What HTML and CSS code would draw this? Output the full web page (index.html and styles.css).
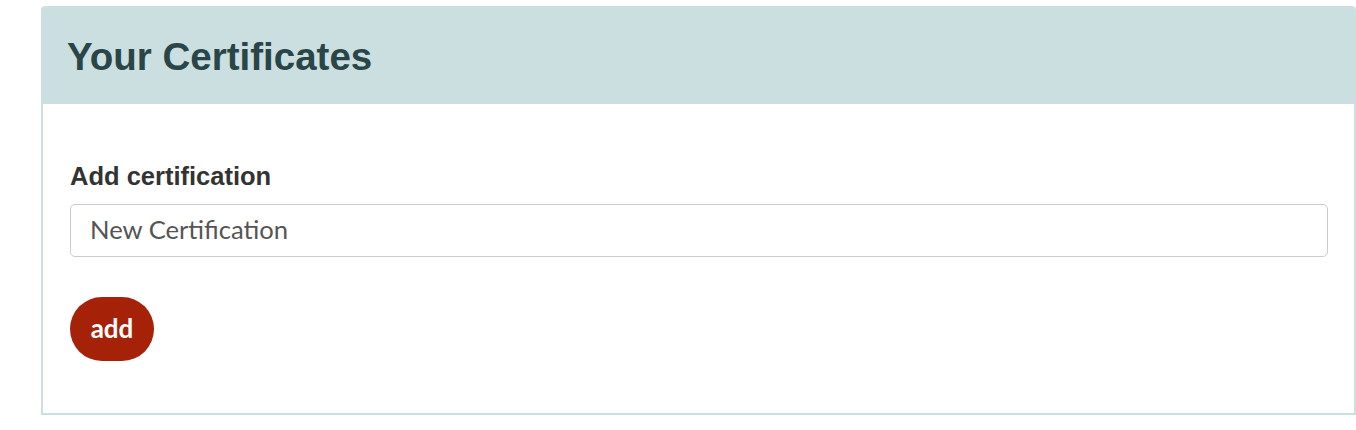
FILE: index.html
```html
<!DOCTYPE html>
<html>
<head>
<meta charset="utf-8">
<link rel="stylesheet" href="styles.css">
</head>
<body>
<section class="panel">
  <header class="panel-head">
    <h2 class="panel-title">Your Certificates</h2>
  </header>
  <div class="panel-body">
    <label class="field-label" for="cert">Add certification</label>
    <input class="field-input" id="cert" type="text" placeholder="New Certification">
    <button class="btn-add" type="button">add</button>
  </div>
</section>
</body>
</html>
```

FILE: styles.css
```css
html, body {
  margin: 0;
  padding: 0;
  background: #ffffff;
}
body {
  padding: 6px 0 0 41px;
  font-family: "Liberation Sans", Arial, sans-serif;
}
.panel {
  border: 2px solid #cbdfe1;
  border-top: 0;
  border-radius: 4px 4px 0 0;
  background: #fff;
  box-sizing: border-box;
  height: 409px;
  overflow: hidden;
}
.panel-head {
  background: #cbdfe1;
  height: 98px;
  display: flex;
  align-items: center;
  padding: 0 0 0 26px;
  margin: 0 -2px;
  border-radius: 4px 4px 0 0;
}
.panel-title {
  margin: 0;
  font-size: 38.5px;
  font-weight: bold;
  color: #2a4548;
  padding-top: 4px;
}
.panel-body {
  padding: 58px 26px 0 27px;
  display: flex;
  flex-direction: column;
  align-items: flex-start;
}
.field-label {
  font-size: 25.5px;
  font-weight: bold;
  color: #333333;
  line-height: 28px;
  margin-bottom: 14px;
}
.field-input {
  width: 100%;
  box-sizing: border-box;
  height: 53px;
  border: 1px solid #cccccc;
  border-radius: 5px;
  padding: 0 19px 4px;
  font-family: Lato, "Open Sans", sans-serif;
  font-size: 25.6px;
  color: #555;
  outline: none;
}
.field-input::placeholder {
  color: #555555;
  opacity: 1;
}
.btn-add {
  margin-top: 40px;
  width: 84px;
  height: 64px;
  border: 0;
  border-radius: 32px;
  background: #a52209;
  color: #ffffff;
  font-family: Lato, "Open Sans", sans-serif;
  font-weight: bold;
  font-size: 26px;
  padding: 0 0 3px;
  cursor: pointer;
}
```
